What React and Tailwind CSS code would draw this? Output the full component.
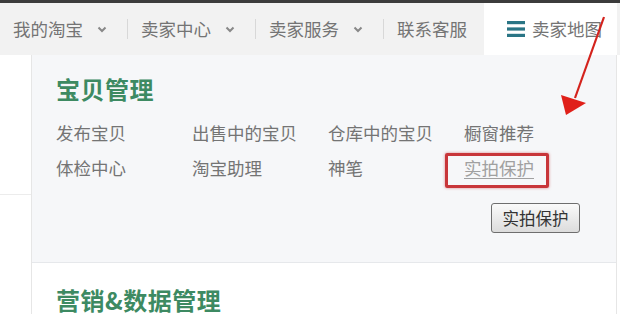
import React from 'react'

const font = { fontFamily: '"Noto Sans CJK SC", "Noto Sans", sans-serif' }

function Chevron() {
  return (
    <svg width="10" height="7" viewBox="0 0 10 7" className="ml-[14px] text-[#888]">
      <path d="M1.5 1.5 L5 5 L8.5 1.5" fill="none" stroke="currentColor" strokeWidth="2" />
    </svg>
  )
}

function NavItem({ label, chevron, width, last }) {
  return (
    <div className={`flex items-center h-full ${width}`}>
      <div className="flex items-center pl-[13px] flex-1">
        <span>{label}</span>
        {chevron && <Chevron />}
      </div>
      {!last && <div className="w-px h-[20px] bg-[#d8d8d8]" />}
    </div>
  )
}

const rows = [
  ['发布宝贝', '出售中的宝贝', '仓库中的宝贝', '橱窗推荐'],
  ['体检中心', '淘宝助理', '神笔', '实拍保护'],
]

export default function App() {
  return (
    <div className="relative w-[620px] h-[326px] overflow-hidden bg-white text-[#747474]" style={font}>
      <div className="h-[3px] bg-[#3c3c3c]" />

      {/* top nav */}
      <div className="flex h-[52px] bg-[#f2f2f2] text-[17.5px] leading-none">
        <NavItem label="我的淘宝" chevron width="w-[128px]" />
        <NavItem label="卖家中心" chevron width="w-[128px]" />
        <NavItem label="卖家服务" chevron width="w-[128px]" />
        <NavItem label="联系客服" width="w-[100px]" last />
        <div className="flex items-center w-[133px] bg-white pl-[23px]">
          <svg width="18" height="18" viewBox="0 0 18 18" className="mr-[7px]">
            <rect x="0" y="1" width="18" height="3.2" fill="#2a7585" />
            <rect x="0" y="7.4" width="18" height="3.2" fill="#2a7585" />
            <rect x="0" y="13.8" width="18" height="3.2" fill="#2a7585" />
          </svg>
          <span>卖家地图</span>
        </div>
      </div>

      <div className="flex">
        <div className="w-[32px] border-r border-[#e6e6e6]">
          <div className="h-[140px] border-b border-[#ececec]" />
        </div>
        <div className="w-[585px] border-r border-[#e6e6e6]">
          {/* 宝贝管理 */}
          <div className="bg-[#f6f7f9] pl-[24px] pt-[20px] pb-[29px] border-b border-[#e6e8eb]">
            <h2 className="text-[24px] leading-[28px] font-bold text-[#3d8a62] tracking-[0.5px]">宝贝管理</h2>
            <div className="mt-[18px] grid grid-cols-[136px_136px_136px_136px] gap-y-[11px] text-[17.5px] leading-[24px]">
              {rows.flat().map((t, i) =>
                i === 7 ? (
                  <span key={t} className="relative">
                    <span className="text-[#a0a0a0] underline underline-offset-[3px]">{t}</span>
                    <span className="absolute left-[-19px] w-[104px] top-[-3px] h-[35px] border-[3px] border-[#c8363a] rounded-[2px] shadow-[0_0_3px_rgba(200,54,58,0.6)]" />
                  </span>
                ) : (
                  <span key={t}>{t}</span>
                ),
              )}
            </div>
            <div className="mt-[23px] flex pl-[435px]">
              <button
                className="w-[89px] h-[30px] rounded-[3px] border border-[#6e6e6e] bg-gradient-to-b from-[#fafafa] to-[#dcdcdc] text-[16.5px] text-[#333] leading-none"
                style={font}
              >
                实拍保护
              </button>
            </div>
          </div>

          {/* 营销&数据管理 */}
          <div className="pl-[24px] pt-[23px]">
            <h2 className="text-[24px] leading-[28px] font-bold text-[#3d8a62] tracking-[0.5px]">营销&amp;数据管理</h2>
          </div>
        </div>
      </div>

      {/* red annotation arrow */}
      <svg className="absolute inset-0 pointer-events-none" width="620" height="326">
        <line x1="604" y1="17" x2="575" y2="98" stroke="#d4231d" strokeWidth="2.2" />
        <polygon points="561,95 586,103 566,115" fill="#e0201a" />
      </svg>
    </div>
  )
}
